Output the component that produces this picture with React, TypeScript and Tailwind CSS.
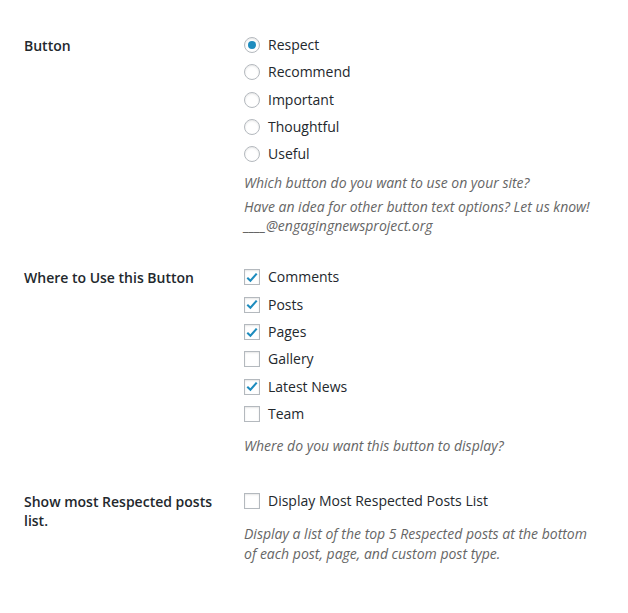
const font = { fontFamily: '"Open Sans", "Noto Sans", sans-serif' };

function Radio({ checked }: { checked?: boolean }) {
  return (
    <span className="flex size-4 shrink-0 items-center justify-center rounded-full border border-[#b4b9be] bg-white shadow-[inset_0_1px_2px_rgba(0,0,0,0.1)]">
      {checked && <span className="size-2 rounded-full bg-[#1e8cbe]" />}
    </span>
  );
}

function Checkbox({ checked }: { checked?: boolean }) {
  return (
    <span className="flex size-4 shrink-0 items-center justify-center border border-[#b4b9be] bg-white shadow-[inset_0_1px_2px_rgba(0,0,0,0.1)]">
      {checked && (
        <svg viewBox="0 0 16 16" className="size-[15px]">
          <path d="M2.6 8.2 L6.2 11.6 L13.4 3.6" fill="none" stroke="#1e8cbe" strokeWidth="2.4" />
        </svg>
      )}
    </span>
  );
}

function Option({ label, checked, type }: { label: string; checked?: boolean; type: "radio" | "checkbox" }) {
  return (
    <div className="flex h-5 items-center gap-2">
      {type === "radio" ? <Radio checked={checked} /> : <Checkbox checked={checked} />}
      <span className="leading-5">{label}</span>
    </div>
  );
}

const buttons = [
  { label: "Respect", checked: true },
  { label: "Recommend" },
  { label: "Important" },
  { label: "Thoughtful" },
  { label: "Useful" },
];

const places = [
  { label: "Comments", checked: true },
  { label: "Posts", checked: true },
  { label: "Pages", checked: true },
  { label: "Gallery" },
  { label: "Latest News", checked: true },
  { label: "Team" },
];

export default function App() {
  return (
    <div className="min-h-[613px] bg-white pl-6 pt-[35px] text-[14px] text-[#23282d]" style={font}>
      {/* Button */}
      <div className="flex">
        <div className="w-[220px] shrink-0 pt-px font-semibold leading-5">Button</div>
        <div>
          <div className="flex flex-col gap-[7.33px]">
            {buttons.map((b) => (
              <Option key={b.label} type="radio" {...b} />
            ))}
          </div>
          <p className="mt-[8.5px] italic leading-[19px] text-[#666]">Which button do you want to use on your site?</p>
          <p className="mt-[5px] italic leading-[19px] text-[#666]">
            Have an idea for other button text options? Let us know!
            <br />
            ____@engagingnewsproject.org
          </p>
        </div>
      </div>

      {/* Where to use */}
      <div className="mt-[32.5px] flex">
        <div className="w-[220px] shrink-0 pt-px font-semibold leading-5">Where to Use this Button</div>
        <div>
          <div className="flex flex-col gap-[7.4px]">
            {places.map((p) => (
              <Option key={p.label} type="checkbox" {...p} />
            ))}
          </div>
          <p className="mt-[11.5px] italic leading-[19px] text-[#666]">Where do you want this button to display?</p>
        </div>
      </div>

      {/* Most respected list */}
      <div className="mt-[36.5px] flex">
        <div className="w-[220px] shrink-0 pr-[10px] pt-px font-semibold leading-[19px]">
          Show most Respected posts list.
        </div>
        <div>
          <Option type="checkbox" label="Display Most Respected Posts List" />
          <p className="mt-[12.5px] w-[350px] italic leading-[20px] text-[#666]">
            Display a list of the top 5 Respected posts at the bottom of each post, page, and custom post type.
          </p>
        </div>
      </div>
    </div>
  );
}
